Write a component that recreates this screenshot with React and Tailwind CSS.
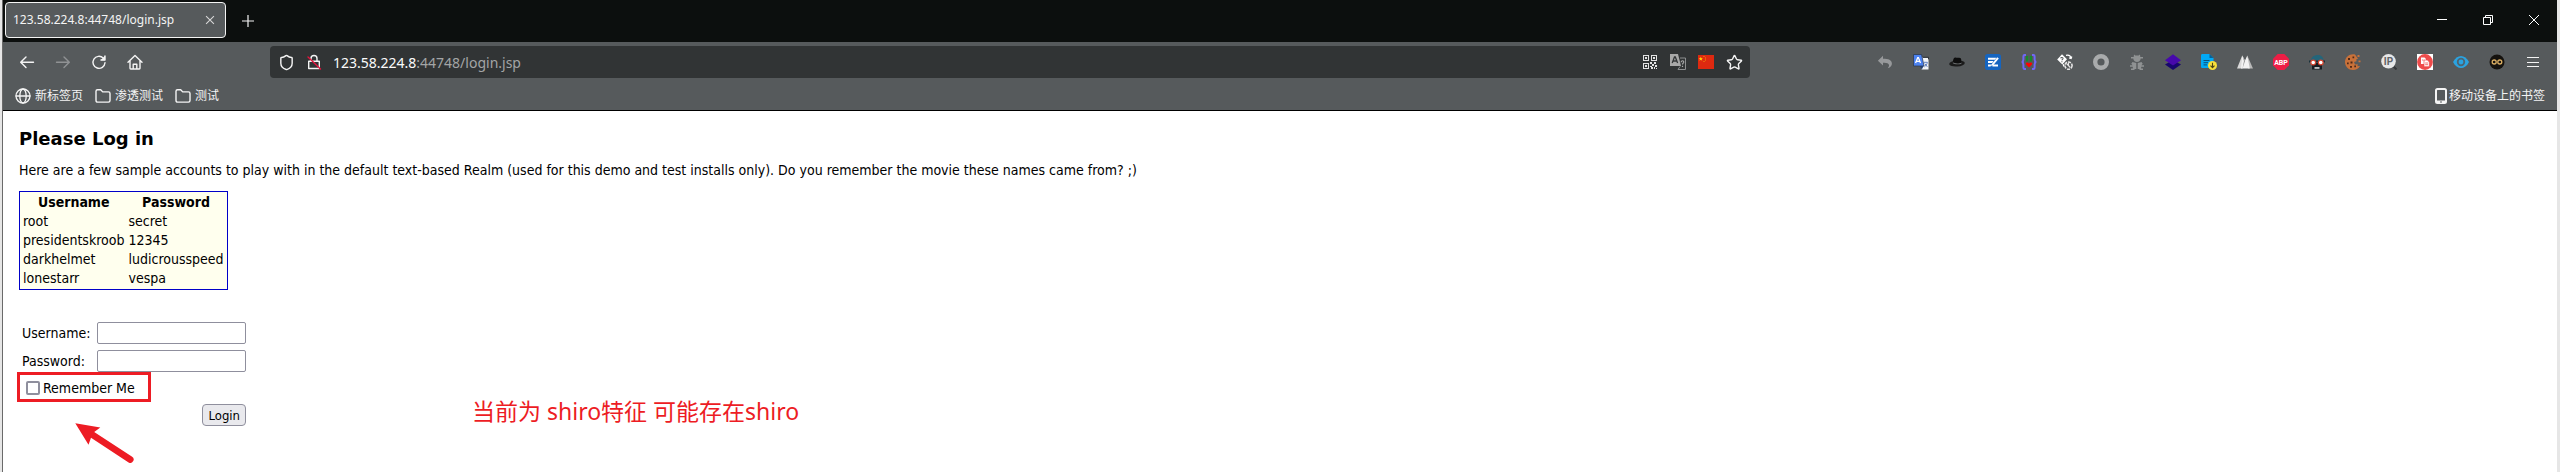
import React from "react";
import { Shield, Star } from "lucide-react";

const ui = "font-['Noto_Sans','Noto_Sans_CJK_SC',sans-serif]";
const stroke = { fill: "none", stroke: "currentColor", strokeWidth: 1.4, strokeLinecap: "round", strokeLinejoin: "round" };

function Icon({ children, className = "h-4 w-4", viewBox = "0 0 16 16", ...rest }) {
  return (
    <svg viewBox={viewBox} className={className} aria-hidden="true" {...rest}>
      {children}
    </svg>
  );
}

const Back = () => <Icon {...stroke}><path d="M14.5 8.3H1.8M7 3L1.7 8.3 7 13.6" /></Icon>;
const Forward = () => <Icon {...stroke}><path d="M1.5 8.3h12.7M9 3l5.3 5.3L9 13.6" /></Icon>;
const Reload = () => (
  <Icon {...stroke}>
    <path d="M14 8.8A6 6 0 1 1 12.2 4" />
    <path d="M14 1.8v4.4H9.6z" fill="currentColor" stroke="none" />
    <path d="M14 2v4H10" />
  </Icon>
);
const Home = () => (
  <Icon {...stroke}>
    <path d="M1 8.2L8 1.4l7 6.8M3 6.8v7.5c0 .4.3.7.7.7h8.6c.4 0 .7-.3.7-.7V6.8M6.2 14.8v-4.6h3.6v4.6" />
  </Icon>
);
const Globe = () => (
  <Icon {...stroke} strokeWidth="1.3">
    <circle cx="8" cy="8" r="7" />
    <ellipse cx="8" cy="8" rx="3.2" ry="7" />
    <path d="M1 8h14" />
  </Icon>
);
const Folder = () => (
  <Icon {...stroke}>
    <path d="M1 3.2c0-.9.6-1.5 1.5-1.5h3.2l2 2.2h5.8c.9 0 1.5.6 1.5 1.5v7.2c0 .9-.6 1.5-1.5 1.5h-11c-.9 0-1.5-.6-1.5-1.5z" />
  </Icon>
);
const BrokenLock = () => (
  <Icon {...stroke}>
    <path d="M5 7V4.5a3 3 0 0 1 6 0V7M2.7 7.2h10.6v7.3H2.7z" />
    <path d="M2 3l12.5 12" stroke="#e2143d" />
  </Icon>
);
const QrCode = () => (
  <Icon viewBox="0 0 14 14" className="h-3.5 w-3.5" fill="#e2e2e2" shapeRendering="crispEdges">
    <path fillRule="evenodd" d="M0 0h6v6H0zM1 1v4h4V1zM8 0h6v6H8zM9 1v4h4V1zM0 8h6v6H0zM1 9v4h4V9z" />
    <path d="M2 2h2v2H2zM10 2h2v2h-2zM2 10h2v2H2zM7 7h2v2H7zM9 9h2v2H9zM11 7h2v2h-2zM7 11h2v1H7zM8 12h2v2H8zM12 10h2v2h-2zM11 12h1v2h-1zM13 13h1v1h-1z" />
  </Icon>
);
const TranslateGrey = () => (
  <Icon>
    <path d="M0 0h8l3 12H0z" fill="#a8a8a8" />
    <path d="M2.2 9L4.5 3h.8l2.3 6M3 7h3.7" fill="none" stroke="#333637" strokeWidth="1.3" />
    <path d="M10 4h5.5v11.5H8l2-3" fill="none" stroke="#8d8f90" strokeWidth="1" />
    <path d="M11.2 8.200c0-2 2.800-1.800 2.500 0-.2 1-1.200 1-1.200 2.200M12.500 11.800v1.200" fill="none" stroke="#a8a8a8" strokeWidth="1.200" />
  </Icon>
);
const Flag = () => (
  <Icon viewBox="0 0 16 14" className="h-3.5 w-4">
    <path d="M0 0h16v14H0z" fill="#de2910" />
    <path d="M2.8 1.7l.6 1.5h1.5l-1.2 1 .5 1.6-1.4-1-1.4 1 .5-1.6-1.2-1h1.5z" fill="#ffde00" />
    <path d="M5.5 1h1v1h-1zM7 2.5h1v1H7zM7 4.5h1v1H7zM5.5 6h1v1h-1z" fill="#ef9a08" />
  </Icon>
);

const UndoArrow = () => (
  <Icon>
    <path d="M6 1.800L.9 6.800 6 11.600V8.800c3.500-.2 5.600.4 6 2.300.2 1.100-.3 2-1.200 3.200 2.800-1 4.200-2.600 4.100-5C14.700 5.900 11.600 4.700 6 4.700z" fill="#97999b" />
  </Icon>
);
const TranslateBlue = () => (
  <Icon>
    <path d="M9 3.5h6.5v12H8.5z" fill="#f3f5f8" />
    <path d="M10 3.3h5.6v2" fill="none" stroke="#23272c" />
    <path d="M0.5.5h8l2.6 11.5H.5z" fill="#4c82ef" stroke="#2a3444" strokeWidth=".7" />
    <path d="M6.8 12l2 3.6 1.8-3.6z" fill="#26406f" />
    <path d="M2.6 9L4.7 3.6h.7L7.5 9M3.3 7.3h3.5" fill="none" stroke="#fff" strokeWidth="1.3" />
    <path d="M10.8 8.3h3.6c-.4 2-1.4 3.5-3 4.6M11.8 9.6l2.5 3.2" fill="none" stroke="#5f7fc0" />
  </Icon>
);
const Hat = () => (
  <Icon>
    <ellipse cx="8" cy="9.5" rx="7.8" ry="3" fill="#1b1b1b" transform="rotate(-5 8 9.5)" />
    <path d="M3.8 8.6C4 5.3 4.8 3.6 6.4 3.5c1 0 1.400.5 2.600.3 1.200-.2 2-.3 2.700.5.700 1 .7 2.700.8 4.300-2 1.400-6.500 1.600-8.700 0z" fill="#0d0d0d" />
    <path d="M3.900 8.300c2 1.500 6.600 1.500 8.600.1v1c-2.200 1.200-6.600 1.200-8.600-.1z" fill="#6c6f71" />
  </Icon>
);
const Notes = () => (
  <Icon>
    <rect width="16" height="16" rx="2.500" fill="#1565c0" />
    <path d="M3 3.800h8.500L9.800 5.800H3zM3 7h5.600L7.200 9H3zM3 10.500h3.200l-.6 2H3zM8.400 10.500H13v2H7.300z" fill="#fff" />
    <path d="M12.300 3.300l1.500 1.200-5.800 7-1.900.8.5-2z" fill="#fff" />
  </Icon>
);
const Braces = () => (
  <Icon>
    <path d="M5 .9H4C2.800.9 2.400 1.500 2.400 2.600v3C2.400 7 1.800 7.800.8 8c1 .2 1.600 1 1.600 2.400v3c0 1.100.4 1.700 1.600 1.700h1M11 .9h1c1.200 0 1.600.6 1.600 1.700v3c0 1.400.6 2.200 1.600 2.400-1 .2-1.600 1-1.600 2.400v3c0 1.100-.4 1.700-1.600 1.700h-1" fill="none" stroke="#6e68f5" strokeWidth="2" />
    <path d="M5 2h2.200v5.500H5zM8.800 2H11v5.500H8.800z" fill="#168a2c" />
    <path d="M8 13.500L4.900 10.300c-.5-1.600 2-2.400 3.100-.9 1.100-1.500 3.600-.7 3.100.9z" fill="#f00" />
  </Icon>
);
const Dice = () => (
  <Icon>
    <path d="M5 .3L10 5.300 5.300 10.500.2 5.500z" fill="#fff" />
    <path d="M3.700 4.300c.2-1.300 2.600-1 2.300.4-.2.700-1 .7-1 1.500M4.900 7.300v.9" fill="none" stroke="#565a5c" strokeWidth="1.100" />
    <path d="M9 1.300c2.500-.6 4.500.7 5 2.700M14.800 2.500l-.7 2-2-.6M7 12.500c-.6-1-.7-1.500-.5-2.300" fill="none" stroke="#fff" strokeWidth="1.300" />
    <circle cx="11.500" cy="11.600" r="3.600" fill="none" stroke="#e5e5e5" strokeWidth="1.600" strokeDasharray="3 1" />
    <path d="M9.500 9.500l3.800 4M11.500 8.500v3" stroke="#e5e5e5" strokeWidth="1.100" />
  </Icon>
);
const Ring = () => <Icon><circle cx="8" cy="8" r="5.800" fill="none" stroke="#a9abac" strokeWidth="4.400" /></Icon>;
const Bug = () => (
  <Icon fill="#8f9293">
    <path d="M5 .5l1.400 1h3.200l1.400-1 .3 2.500H14v1.500H11.700C11.500 6.500 10 8 8 8S4.500 6.500 4.300 4.500H2V3h2.700z" />
    <path d="M3.500 8l3.800 1V15H5.500v1H2v-1.500h1.800v-1.700H1v-1.500h2.600l-1.300-1.500zM12.500 8L8.700 9V15h1.800v1H14v-1.500h-1.800v-1.700H15v-1.500h-2.600l1.300-1.500z" />
  </Icon>
);
const Layers = () => (
  <Icon>
    <path d="M0 10.500l8-4.500 8 4.500-8 5.500z" fill="#17066e" />
    <path d="M0 6.200L8 .3l8 5.900-8 5.300z" fill="#4709ac" />
  </Icon>
);
const FileDown = () => (
  <Icon>
    <path d="M1.500 0h7l4 4v10h-11C.700 14 0 13.500 0 12.500v-11C0 .500.500 0 1.500 0z" fill="#03a9f4" />
    <path d="M8.500 0v4h4z" fill="#0b5f93" />
    <path d="M2.500 6.500h6M2.500 8.700h4.500M2.500 10.900h3.500" stroke="#08527e" strokeWidth="1" />
    <circle cx="11.500" cy="11.500" r="4.500" fill="#f8e03a" />
    <path d="M11.500 8.800v4.800M9.500 11.700l2 2 2-2" fill="none" stroke="#4a4515" strokeWidth="1.100" />
  </Icon>
);
const Peaks = () => (
  <Icon>
    <path d="M5.200 1.500L7.500 7l-2 7.500H0z" fill="#d9d9d9" />
    <path d="M10.300 1.500L16 14.500H11z" fill="#b9b9b9" />
    <path d="M5.300 1.500L8 6.500l2.300-5 2.500 13H4z" fill="#f2f2f2" />
    <path d="M5.300 1.500L8 7 5.500 14.500 7 7z" fill="#8d8d8d" />
  </Icon>
);
const AdBlock = () => (
  <Icon>
    <path d="M4.700 0h6.600L16 4.700v6.600L11.300 16H4.700L0 11.300V4.700z" fill="#ed1e45" />
    <text x="8" y="10.700" textAnchor="middle" fontSize="7" fontWeight="700" fill="#fff" fontFamily="Roboto, sans-serif">ABP</text>
  </Icon>
);
const Goggles = () => (
  <Icon>
    <path d="M2 7c0-4 3-6 7-6 3.500 0 5.500 2.500 5.500 6z" fill="#24657a" />
    <path d="M3 9h10v6.500H3z" fill="#151c22" />
    <path d="M5.500 13.200h5v1.500h-5z" fill="#e8e8e8" />
    <path d="M0 6.500h16v2H0z" fill="#17303b" />
    <circle cx="4.200" cy="8.500" r="2.400" fill="#fff" stroke="#d2422d" strokeWidth="1.200" />
    <circle cx="11.800" cy="8.500" r="2.400" fill="#fff" stroke="#d2422d" strokeWidth="1.200" />
  </Icon>
);
const Cookie = () => (
  <Icon>
    <path d="M10 .5C5 -.7 0 3 0 8c0 4.500 3.500 8 8 8 3 0 5.500-1.500 7-4l-2.500.2.200-2-2.700.2L9 8l2.500-.7-.2-2L13 4.800z" fill="#c8713a" />
    <path d="M12.500 1h2v2h-2zM13.500 6.500h2v1.800h-2z" fill="#c8713a" />
    <path d="M3 4h2v2H3zM7.500 2.500h1.700v1.700H7.500zM2 8.500h1.700v1.700H2zM5.500 7.500h2v2h-2zM5 12h2v1.700H5zM9.300 11.500h1.700v1.700H9.300z" fill="#4e2a19" />
  </Icon>
);
const IpSearch = () => (
  <Icon>
    <path d="M12 12l3.500 3.500" stroke="#34373a" strokeWidth="2" />
    <circle cx="7.500" cy="7.300" r="7.300" fill="#e6e7e8" />
    <text x="7.500" y="11" textAnchor="middle" fontSize="10" fontWeight="700" fill="#5f6365" fontFamily="Roboto, sans-serif">IP</text>
  </Icon>
);
const Copy = () => (
  <Icon>
    <path d="M0 0h16v16H0z" fill="#fff" />
    <circle cx="8" cy="8" r="7.900" fill="#ef4b4b" />
    <path d="M4 3.500h3.500L9 5v5H4z" fill="#fff" />
    <path d="M7 6h3.500L12.300 8v4.700H7z" fill="#fff" stroke="#ef4b4b" strokeWidth=".7" />
    <path d="M8.200 9h2.800M8.200 10.700h2.800M5 6h1.500" stroke="#ef4b4b" strokeWidth=".8" />
  </Icon>
);
const Eye = () => (
  <Icon>
    <path d="M0 8c2-4 5-6 8-6s6 2 8 6c-2 4-5 6-8 6s-6-2-8-6z" fill="#2ba3e0" />
    <circle cx="8" cy="8" r="3.300" fill="none" stroke="#4d6472" strokeWidth="1.800" />
  </Icon>
);
const Infinity = () => (
  <Icon>
    <circle cx="8" cy="8" r="7.500" fill="#15120e" />
    <circle cx="5.200" cy="8" r="2" fill="none" stroke="#d9ad62" strokeWidth="1.300" />
    <circle cx="10.800" cy="8" r="2" fill="none" stroke="#d9ad62" strokeWidth="1.300" />
  </Icon>
);
const Menu = () => (
  <Icon shapeRendering="crispEdges"><path d="M2 3.500h12M2 8.500h12M2 12.500h12" stroke="#f4f4f4" strokeWidth="1" /></Icon>
);

const extensions = [
  ["Undo close", UndoArrow],
  ["Translate", TranslateBlue],
  ["Hat", Hat],
  ["Notes", Notes],
  ["Braces", Braces],
  ["Dice", Dice],
  ["Ring", Ring],
  ["Bug", Bug],
  ["Layers", Layers],
  ["Downloads", FileDown],
  ["Peaks", Peaks],
  ["Adblock", AdBlock],
  ["Goggles", Goggles],
  ["Cookies", Cookie],
  ["IP lookup", IpSearch],
  ["Copy", Copy],
  ["Eye", Eye],
  ["Infinity", Infinity],
  ["Menu", Menu],
];

const pageActions = [
  ["QR code", QrCode],
  ["Translate page", TranslateGrey],
  ["Server location", Flag],
  ["Bookmark", () => <Star className="h-[17px] w-[17px]" strokeWidth={2} />],
];

const accounts = [
  ["root", "secret"],
  ["presidentskroob", "12345"],
  ["darkhelmet", "ludicrousspeed"],
  ["lonestarr", "vespa"],
];

function IconButton({ label, className = "w-9", children }) {
  return (
    <button type="button" aria-label={label} className={`flex h-8 shrink-0 items-center justify-center ${className}`}>
      {children}
    </button>
  );
}

function TabBar() {
  return (
    <div className="flex h-[42px] items-center bg-[#0c0f0e] pl-0.5">
      <div className="mb-0.5 flex h-9 w-[221px] items-center justify-between rounded border border-[#f4f4f4] bg-[#565a5c] pr-2 pl-[7px]">
        <span className="text-[12px]">123.58.224.8:44748/login.jsp</span>
        <button type="button" aria-label="Close tab">
          <Icon className="h-3.5 w-3.5" stroke="#d8d8d8" strokeWidth="1.200"><path d="M3.500 3.500l9 9M12.500 3.500l-9 9" /></Icon>
        </button>
      </div>
      <IconButton label="New tab" className="ml-1 w-9">
        <Icon stroke="#f4f4f4" strokeWidth="1.200"><path d="M8 2v12M2 8h12" /></Icon>
      </IconButton>
      <div className="mb-0.5 ml-auto flex">
        <IconButton label="Minimize" className="w-[46px]">
          <Icon stroke="#fff" className="h-2.5 w-2.5" viewBox="0 0 10 10"><path d="M0 4.500h10" /></Icon>
        </IconButton>
        <IconButton label="Restore" className="w-[46px]">
          <Icon stroke="#fff" fill="none" className="h-2.5 w-2.5" viewBox="0 0 10 10"><path d="M.5 2.500h7v7h-7zM2.500 2.500v-2h7v7h-2" /></Icon>
        </IconButton>
        <IconButton label="Close" className="w-[46px]">
          <Icon stroke="#fff" className="h-2.5 w-2.5" viewBox="0 0 10 10"><path d="M0 0l10 10M10 0L0 10" /></Icon>
        </IconButton>
      </div>
    </div>
  );
}

function Toolbar() {
  return (
    <div className="flex h-10 items-center pl-1.5">
      <IconButton label="Back"><Back /></IconButton>
      <IconButton label="Forward"><span className="text-[#909294]"><Forward /></span></IconButton>
      <IconButton label="Reload"><Reload /></IconButton>
      <IconButton label="Home"><Home /></IconButton>
      <div className="ml-[117px] flex h-8 grow items-center rounded bg-[#313435] pr-0.5 pl-0.5">
        <IconButton label="Site protection" className="w-7"><Shield className="h-[17px] w-[17px]" strokeWidth={2} /></IconButton>
        <IconButton label="Connection not secure" className="w-7"><BrokenLock /></IconButton>
        <div className="grow pl-[5px] text-[14px] text-[#a3a5a6]">
          <span className="text-[#fbfbfb]">123.58.224.8</span>:44748/login.jsp
        </div>
        {pageActions.map(([label, Glyph]) => (
          <IconButton key={label} label={label} className="w-7"><Glyph /></IconButton>
        ))}
      </div>
      <div className="ml-[117px] flex pr-1.5">
        {extensions.map(([label, Glyph]) => (
          <IconButton key={label} label={label}><Glyph /></IconButton>
        ))}
      </div>
    </div>
  );
}

function Bookmarks() {
  return (
    <div className="flex h-7 items-center gap-3 pr-3 pl-3 text-[12px]">
      <a href="#new" className="flex items-center gap-1"><Globe />新标签页</a>
      <a href="#pentest" className="flex items-center gap-1"><Folder />渗透测试</a>
      <a href="#test" className="flex items-center gap-1"><Folder />测试</a>
      <a href="#mobile" className="ml-auto flex items-center gap-0.5">
        <Icon viewBox="0 0 12 16" className="h-4 w-3">
          <rect x="1" y="1" width="10" height="14" rx="1.500" fill="none" stroke="#f4f4f4" strokeWidth="2" />
          <path d="M1 12.500h10V15H1z" fill="#f4f4f4" /><path d="M5 13.500h2v1H5z" fill="#565a5c" />
        </Icon>
        移动设备上的书签
      </a>
    </div>
  );
}

function LoginPage() {
  return (
    <main className="relative px-4 pt-4 pb-8 font-['DejaVu_Sans_Condensed','DejaVu_Sans',Verdana,sans-serif] text-[14px] leading-[15px] text-black">
      <h2 className="font-['DejaVu_Sans',Verdana,sans-serif] text-[18px] leading-6 font-bold">Please Log in</h2>
      <p className="mt-3">
        Here are a few sample accounts to play with in the default text-based Realm (used for this demo and test installs only). Do you remember the movie these names came from? ;)
      </p>
      <table className="mt-[13px] border-separate border-spacing-x-0.5 border-spacing-y-0 border border-[#0000c8] bg-[#ffffee] py-px">
        <thead>
          <tr>
            <th className="px-px py-0.5">Username</th>
            <th className="px-px py-0.5">Password</th>
          </tr>
        </thead>
        <tbody>
          {accounts.map(([name, secret]) => (
            <tr key={name}>
              <td className="px-px py-0.5">{name}</td>
              <td className="px-px py-0.5">{secret}</td>
            </tr>
          ))}
        </tbody>
      </table>
      <form className="mt-8 flex w-[227px] flex-col" onSubmit={(e) => e.preventDefault()}>
        <div className="grid grid-cols-[75px_1fr] items-center gap-y-1.5 pl-[3px]">
          <label htmlFor="username">Username:</label>
          <input id="username" type="text" className="h-[22px] min-w-0 rounded-xs border border-[#8f8f9d] bg-white px-1" />
          <label htmlFor="password">Password:</label>
          <input id="password" type="password" className="h-[22px] min-w-0 rounded-xs border border-[#8f8f9d] bg-white px-1" />
        </div>
        <label className="relative mt-2 flex h-4 items-center gap-[3px] pl-[7px]">
          <input type="checkbox" className="h-3.5 w-3.5 appearance-none rounded-xs border-2 border-[#8f8f9d] bg-white" />
          Remember Me
          <span className="absolute -top-2 -left-0.5 h-[30px] w-[134px] border-3 border-[#ed1c24]" />
        </label>
        <button type="submit" className="mt-2 h-[22px] self-end rounded border border-[#8f8f9d] bg-[#e9e9ed] px-[5px] text-[13px]">Login</button>
      </form>
      <svg viewBox="0 0 60 42" className="absolute top-[312px] left-[71px] h-[42px] w-[60px]" aria-hidden="true">
        <path d="M1.300.3L26.300 4.500 20.200 9 57.800 33.500A3.300 3.300 0 0 1 54.600 39.500L17 14.800 14.500 21.800z" fill="#ed1c24" />
      </svg>
      <p className={`absolute top-[284px] left-[469px] text-[23px] leading-8 whitespace-nowrap text-[#ed1c24] ${ui}`}>
        当前为 shiro特征 可能存在shiro
      </p>
    </main>
  );
}

export default function App() {
  return (
    <div className="flex min-h-screen flex-col border-r-3 border-l-2 border-[#e6e6e6] bg-white">
      <div className="grow border-l border-[#6a6a6a]">
        <header className={`border-b border-black bg-[#565a5c] text-[#f4f4f4] ${ui}`}>
          <TabBar />
          <Toolbar />
          <Bookmarks />
        </header>
        <LoginPage />
      </div>
    </div>
  );
}
